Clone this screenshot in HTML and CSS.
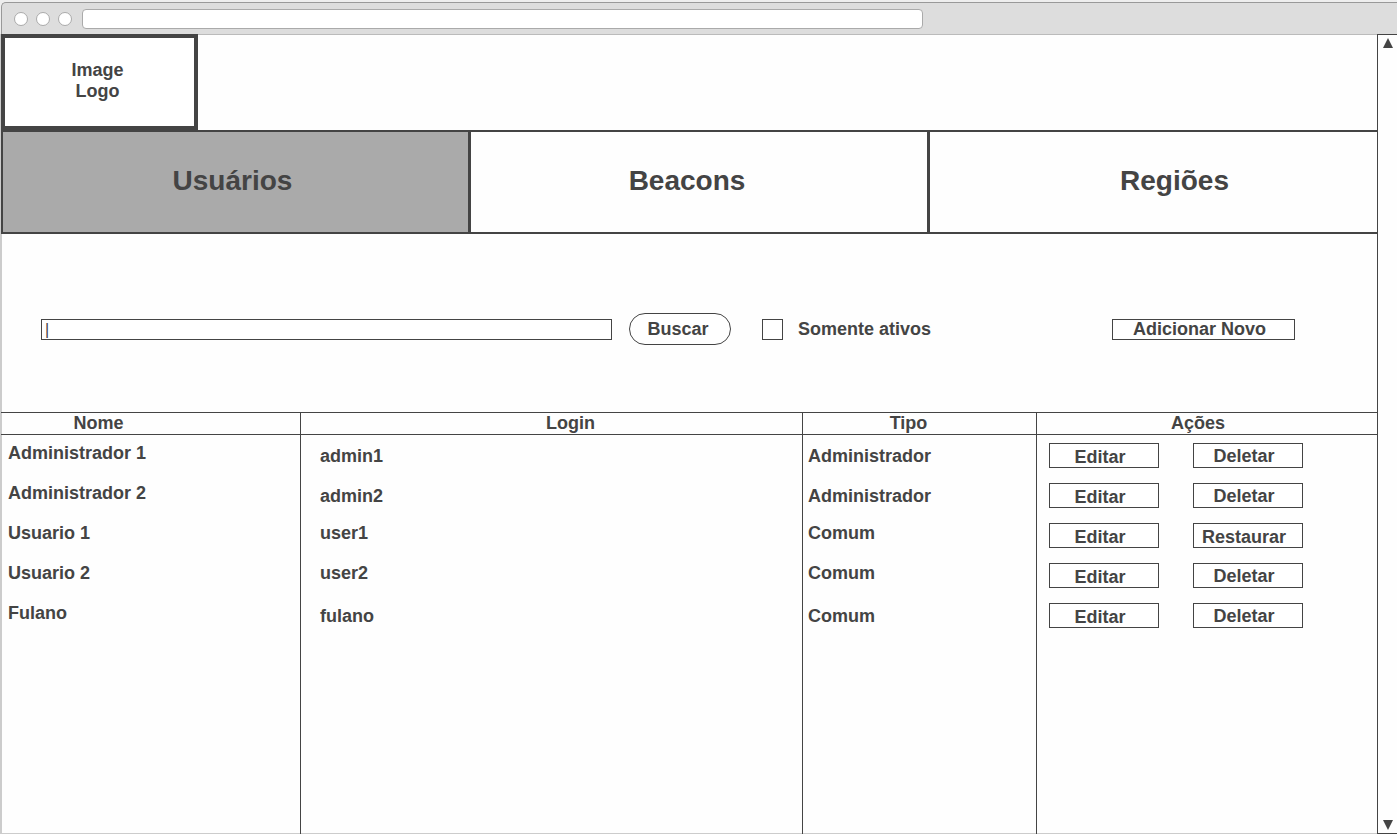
FILE: index.html
```html
<!DOCTYPE html>
<html lang="pt-BR">
<head>
<meta charset="utf-8">
<title>Usuários</title>
<link rel="stylesheet" href="styles.css">
</head>
<body>
<div class="chrome">
  <span class="dot"></span><span class="dot"></span><span class="dot"></span>
  <input class="address" type="text" aria-label="Endereço">
</div>
<div class="window">
  <main class="page">
    <header class="header"><div class="logo">Image<br>Logo</div></header>
    <nav class="tabs">
      <a class="tab tab-users" href="#usuarios" aria-current="page">Usuários</a>
      <a class="tab tab-beacons" href="#beacons">Beacons</a>
      <a class="tab tab-regions" href="#regioes">Regiões</a>
    </nav>
    <form class="toolbar">
      <input class="search" type="text" value="|" aria-label="Busca">
      <button class="btn-search" type="button">Buscar</button>
      <label class="only-active"><input class="check" type="checkbox">Somente ativos</label>
      <button class="btn btn-add" type="button">Adicionar Novo</button>
    </form>
    <div class="table-wrap">
      <table class="users">
        <colgroup><col class="col-name"><col><col class="col-type"><col class="col-actions"></colgroup>
        <thead>
          <tr><th class="th-name">Nome</th><th class="th-login">Login</th><th class="th-type">Tipo</th><th class="th-actions">Ações</th></tr>
        </thead>
        <tbody>
          <tr><td class="name">Administrador 1</td><td class="login">admin1</td><td class="type">Administrador</td><td><div class="actions"><button class="btn btn-edit" type="button">Editar</button><button class="btn btn-row" type="button">Deletar</button></div></td></tr>
          <tr><td class="name">Administrador 2</td><td class="login">admin2</td><td class="type">Administrador</td><td><div class="actions"><button class="btn btn-edit" type="button">Editar</button><button class="btn btn-row" type="button">Deletar</button></div></td></tr>
          <tr class="level"><td class="name">Usuario 1</td><td class="login">user1</td><td class="type">Comum</td><td><div class="actions"><button class="btn btn-edit" type="button">Editar</button><button class="btn btn-edit" type="button">Restaurar</button></div></td></tr>
          <tr class="level"><td class="name">Usuario 2</td><td class="login">user2</td><td class="type">Comum</td><td><div class="actions"><button class="btn btn-edit" type="button">Editar</button><button class="btn btn-row" type="button">Deletar</button></div></td></tr>
          <tr><td class="name">Fulano</td><td class="login">fulano</td><td class="type">Comum</td><td><div class="actions"><button class="btn btn-edit" type="button">Editar</button><button class="btn btn-row" type="button">Deletar</button></div></td></tr>
          <tr class="filler" aria-hidden="true"><td></td><td></td><td></td><td></td></tr>
        </tbody>
      </table>
    </div>
  </main>
  <div class="scrollbar">
    <svg class="arrow" viewBox="0 0 10 10" aria-hidden="true"><path d="M5 0L10 10H0Z"/></svg>
    <svg class="arrow" viewBox="0 0 10 10" aria-hidden="true"><path d="M0 0H10L5 10Z"/></svg>
  </div>
</div>
</body>
</html>
```
FILE: styles.css
```css
* { box-sizing: border-box; }

body {
  margin: 0;
  min-height: 100vh;
  display: flex;
  flex-direction: column;
  padding-top: 2px;
  background: #eee;
  color: #444;
  font: bold 18px/21px "Liberation Sans", Arial, sans-serif;
}

button, input { font: inherit; color: inherit; margin: 0; }

.chrome {
  display: flex;
  align-items: center;
  gap: 8px;
  height: 32px;
  margin-left: 1px;
  padding-left: 12px;
  background: #ddd;
  border-top: 1px solid #999;
  border-left: 1px solid #999;
  border-top-left-radius: 5px;
}

.dot {
  width: 14px;
  height: 14px;
  border: 1px solid #aaa;
  border-radius: 50%;
  background: #fff;
}

.address {
  width: 60.8%;
  height: 20px;
  margin-left: 2px;
  border: 1px solid #aaa;
  border-radius: 4px;
  background: #fff;
}

.window { flex: 1; display: flex; background: #fefefe; }

.page {
  flex: 1;
  min-width: 0;
  display: flex;
  flex-direction: column;
  padding-left: 1px;
  box-shadow: inset 2px 0 #ccc, inset 0 1px #bbb, inset 0 -1px #ccc;
}

.header { display: flex; }

.logo {
  width: 197px;
  height: 96px;
  padding: 22px 4px 0 0;
  border: 4px solid #444;
  background: #fff;
  text-align: center;
}

.tabs {
  display: grid;
  grid-template-columns: 470fr 459fr 447fr;
  height: 104px;
  border: solid #444;
  border-width: 2px 0;
}

.tab {
  display: flex;
  align-items: center;
  justify-content: center;
  border-right: 3px solid #444;
  color: inherit;
  font-size: 28px;
  line-height: 32px;
  text-decoration: none;
  padding-bottom: 2px;
}

.tab-users { background: #aaa; border-left: 2px solid #444; padding-right: 6px; }
.tab-beacons { padding-right: 24px; }
.tab-regions { border-right: 0; padding-left: 42px; }

.toolbar {
  display: flex;
  align-items: center;
  padding: 79px 82px 67px 40px;
}

.search {
  flex: 1;
  min-width: 0;
  height: 21px;
  padding: 0 3px;
  border: 1px solid #444;
  background: #fff;
  font-size: 16px;
  font-weight: normal;
}

.btn-search {
  width: 102px;
  height: 32px;
  margin-left: 17px;
  padding: 0 4px 0 0;
  border: 1px solid #444;
  border-radius: 16px;
  background: #fff;
}

.only-active { display: flex; align-items: center; gap: 15px; margin-left: 31px; }

.check {
  appearance: none;
  width: 21px;
  height: 21px;
  border: 1px solid #444;
  background: #fff;
}

.btn {
  width: 110px;
  height: 25px;
  padding: 1px 8px 0 0;
  border: 1px solid #444;
  background: #fff;
  line-height: 21px;
}

.btn-add { width: 183px; height: 21px; margin-left: 181px; padding-top: 0; line-height: 19px; }
.btn-edit { padding-top: 3px; }

.table-wrap { flex: 1; display: flex; }

.users {
  width: 100%;
  table-layout: fixed;
  border-spacing: 0;
}

.col-name { width: 300px; }
.col-type { width: 234px; }
.col-actions { width: 340px; }

.users th {
  height: 23px;
  padding: 0;
  border: solid #444;
  border-width: 1px 1px 1px 0;
  line-height: 21px;
}

.users .th-name { padding-right: 104px; }
.users .th-login { padding-left: 38px; }
.users .th-type { padding-right: 22px; }
.users .th-actions { padding-right: 18px; }

.users td {
  height: 40px;
  padding: 8px 0 0;
  border-right: 1px solid #444;
  vertical-align: top;
}

.users th:last-child, .users td:last-child { border-right: 0; }

.users .name { padding-left: 7px; }
.users .login { padding-left: 19px; padding-top: 11px; }
.users .type { padding-left: 5px; padding-top: 11px; }
.users .level td { padding-top: 8px; }
.users .filler td { height: auto; padding: 0; }

.actions { display: flex; gap: 34px; padding-left: 12px; }

.scrollbar {
  width: 20px;
  display: flex;
  flex-direction: column;
  justify-content: space-between;
  align-items: center;
  padding: 3px 0;
  border: solid #444;
  border-width: 1px 0 1px 1px;
}

.arrow { width: 10px; height: 10px; fill: #444; }
```
